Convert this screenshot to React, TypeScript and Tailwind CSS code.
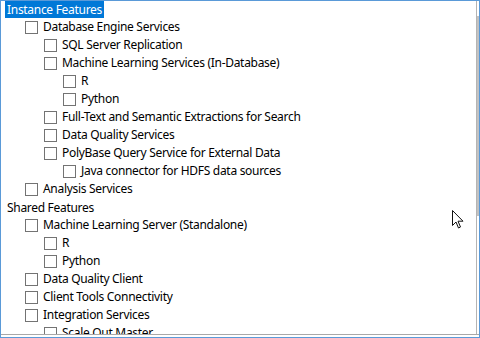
const rows: { label: string; level: number; header?: boolean; selected?: boolean }[] = [
  { label: 'Instance Features', level: 0, header: true, selected: true },
  { label: 'Database Engine Services', level: 1 },
  { label: 'SQL Server Replication', level: 2 },
  { label: 'Machine Learning Services (In-Database)', level: 2 },
  { label: 'R', level: 3 },
  { label: 'Python', level: 3 },
  { label: 'Full-Text and Semantic Extractions for Search', level: 2 },
  { label: 'Data Quality Services', level: 2 },
  { label: 'PolyBase Query Service for External Data', level: 2 },
  { label: 'Java connector for HDFS data sources', level: 3 },
  { label: 'Analysis Services', level: 1 },
  { label: 'Shared Features', level: 0, header: true },
  { label: 'Machine Learning Server (Standalone)', level: 1 },
  { label: 'R', level: 2 },
  { label: 'Python', level: 2 },
  { label: 'Data Quality Client', level: 1 },
  { label: 'Client Tools Connectivity', level: 1 },
  { label: 'Integration Services', level: 1 },
  { label: 'Scale Out Master', level: 2 },
];

const indent: Record<number, string> = {
  1: 'pl-[24px]',
  2: 'pl-[43px]',
  3: 'pl-[62px]',
};

export default function App() {
  return (
    <div className="relative w-[480px] h-[338px] bg-white border border-[#5a9ad8] font-['Noto_Sans',sans-serif] text-[12px] tracking-[-0.3px] text-black overflow-hidden">
      <div className="flex h-[334px] border-b border-[#a8a8a8]">
        {/* Feature tree */}
        <div className="flex-1 overflow-hidden">
          {rows.map((r, i) =>
            r.header ? (
              <div key={i} className={(i === 0 ? 'h-[17px]' : 'h-[18px]') + ' flex items-center pl-[4px]'}>
                <span
                  className={
                    'h-[17px] leading-[17px] px-[2px] ' +
                    (r.selected ? 'bg-[#0078d7] text-white' : '')
                  }
                >
                  {r.label}
                </span>
              </div>
            ) : (
              <div key={i} className={`h-[18px] flex items-center ${indent[r.level]}`}>
                <span className="w-[13px] h-[13px] border border-[#737373] bg-white shrink-0" />
                <span className="ml-[5px] whitespace-nowrap leading-[18px]">{r.label}</span>
              </div>
            )
          )}
        </div>

        {/* Scrollbar */}
        <div className="w-[3px] flex flex-col border-l border-[#b4b4b4]">
          <div className="h-[15px]" />
          <div className="h-[200px] bg-[#c2c2c2]" />
          <div className="flex-1" />
        </div>
      </div>

      {/* Mouse pointer */}
      <svg
        className="absolute left-[450px] top-[208px]"
        width="14"
        height="21"
        viewBox="0 0 14 21"
      >
        <path
          d="M1.5 1.5 L1.5 16.5 L5 13 L7.5 19 L9.5 18 L7 12.2 L12 12.2 Z"
          fill="white"
          stroke="#111"
          strokeWidth="1"
          strokeLinejoin="miter"
        />
      </svg>
    </div>
  );
}
